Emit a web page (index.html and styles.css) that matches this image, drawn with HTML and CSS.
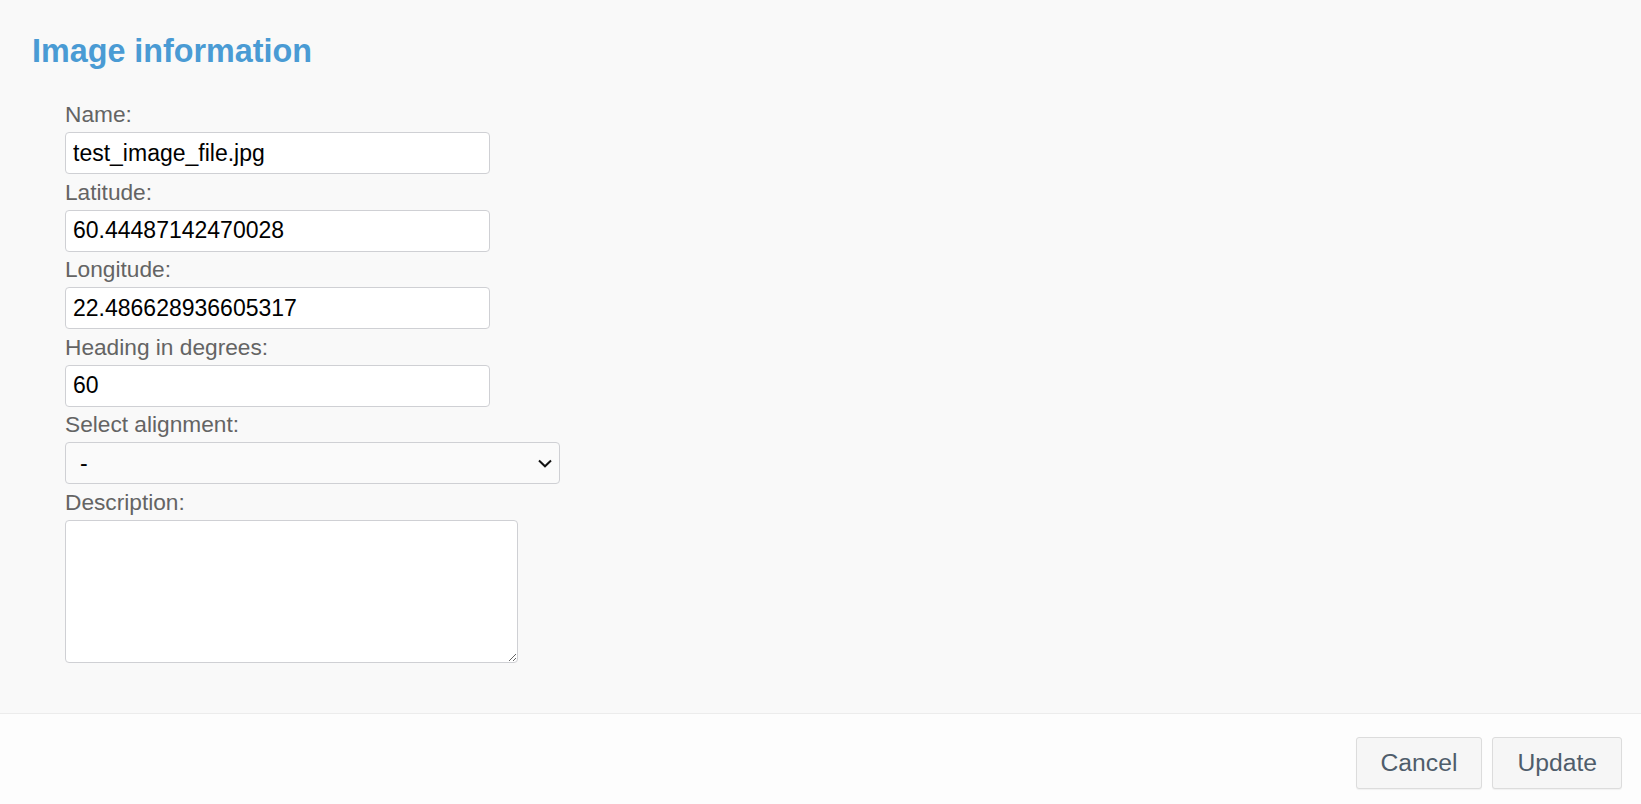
FILE: index.html
```html
<!DOCTYPE html>
<html lang="en">
<head>
<meta charset="utf-8">
<title>Image information</title>
<link rel="stylesheet" href="styles.css">
</head>
<body>
<div class="page">
  <main class="main">
    <h1 class="title">Image information</h1>
    <form class="form">
      <div class="field">
        <label class="label" for="name">Name:</label>
        <input class="control" id="name" type="text" value="test_image_file.jpg">
      </div>
      <div class="field">
        <label class="label" for="lat">Latitude:</label>
        <input class="control" id="lat" type="text" value="60.44487142470028">
      </div>
      <div class="field">
        <label class="label" for="lon">Longitude:</label>
        <input class="control" id="lon" type="text" value="22.486628936605317">
      </div>
      <div class="field">
        <label class="label" for="heading">Heading in degrees:</label>
        <input class="control" id="heading" type="text" value="60">
      </div>
      <div class="field">
        <label class="label" for="align">Select alignment:</label>
        <div class="select-wrap">
          <select class="select" id="align">
            <option>-</option>
          </select>
          <svg class="chevron" width="14" height="9" viewBox="0 0 14 9"><path d="M1 1.5 L7 7.3 L13 1.5" fill="none" stroke="#111" stroke-width="2"/></svg>
        </div>
      </div>
      <div class="field">
        <label class="label" for="desc">Description:</label>
        <textarea class="textarea" id="desc"></textarea>
      </div>
    </form>
  </main>
  <footer class="footer">
    <button class="btn" type="button">Cancel</button>
    <button class="btn" type="button">Update</button>
  </footer>
</div>
</body>
</html>
```
FILE: styles.css
```css
html, body {
  margin: 0;
  padding: 0;
  height: 100%;
}
body {
  font-family: "Liberation Sans", Arial, sans-serif;
  background: #fdfdfd;
}
.page {
  display: flex;
  flex-direction: column;
  height: 804px;
}
.main {
  height: 714px;
  box-sizing: border-box;
  background: #f9f9f9;
  border-bottom: 1px solid #ececec;
  padding: 32px 0 0 32px;
}
.title {
  margin: 0;
  font-size: 32.3px;
  line-height: 38px;
  font-weight: bold;
  color: #4a9bd4;
}
.form {
  margin: 29px 0 0 33px;
  display: flex;
  flex-direction: column;
  gap: 2.5px;
}
.field {
  display: flex;
  flex-direction: column;
  align-items: flex-start;
}
.label {
  font-size: 22.7px;
  line-height: 31px;
  color: #646464;
  margin-bottom: 2px;
}
.control {
  box-sizing: border-box;
  width: 425px;
  height: 42px;
  margin: 0;
  padding: 0 7px;
  border: 1px solid #cfd0d4;
  border-radius: 4px;
  background: #fff;
  font-family: "Liberation Sans", Arial, sans-serif;
  font-size: 23px;
  color: #000;
  outline: none;
}
.select-wrap {
  position: relative;
  width: 495px;
  height: 42px;
}
.select {
  box-sizing: border-box;
  width: 100%;
  height: 42px;
  margin: 0;
  padding: 0 14px;
  border: 1px solid #cfd0d4;
  border-radius: 4px;
  background: #fafafa;
  font-family: "Liberation Sans", Arial, sans-serif;
  font-size: 23px;
  color: #000;
  appearance: none;
  -webkit-appearance: none;
  outline: none;
}
.chevron {
  position: absolute;
  right: 8px;
  top: 17px;
  pointer-events: none;
}
.textarea {
  box-sizing: border-box;
  width: 453px;
  height: 143px;
  margin: 0;
  border: 1px solid #cfd0d4;
  border-radius: 4px;
  background: #fff;
  font-family: "Liberation Sans", Arial, sans-serif;
  font-size: 23px;
  outline: none;
}
.footer {
  flex: 1;
  display: flex;
  justify-content: flex-end;
  align-items: flex-start;
  gap: 10px;
  padding: 23px 19px 0 0;
}
.btn {
  height: 52px;
  padding: 0 24px;
  margin: 0;
  border: 1px solid #dcdcdc;
  border-radius: 3px;
  background: #f6f6f6;
  box-shadow: 0 1px 1px rgba(0, 0, 0, 0.05);
  font-family: "Liberation Sans", Arial, sans-serif;
  font-size: 24.7px;
  color: #4f5d6b;
  cursor: pointer;
}
```
